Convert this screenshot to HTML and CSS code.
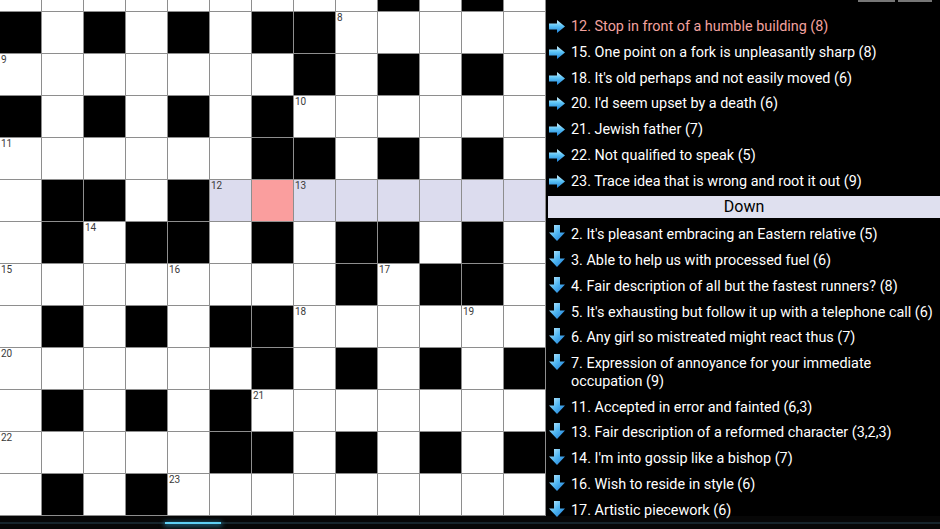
FILE: index.html
```html
<!DOCTYPE html>
<html>
<head>
<meta charset="utf-8">
<link rel="stylesheet" href="styles.css">
</head>
<body>
<svg width="0" height="0" class="defs">
  <defs>
    <linearGradient id="gr" x1="0" y1="0" x2="0" y2="1">
      <stop offset="0" stop-color="#d6f4ff"/>
      <stop offset="0.45" stop-color="#5cc4f7"/>
      <stop offset="1" stop-color="#1d7fd6"/>
    </linearGradient>
    <linearGradient id="gd" x1="0" y1="0" x2="1" y2="1">
      <stop offset="0" stop-color="#c9efff"/>
      <stop offset="0.5" stop-color="#4fb6f2"/>
      <stop offset="1" stop-color="#1a74cf"/>
    </linearGradient>
    <symbol id="ar" viewBox="0 0 16 13"><path d="M0 3.5 H8 V0 L16 6.5 L8 13 V9.5 H0 Z" fill="url(#gr)"/></symbol>
    <symbol id="ad" viewBox="0 0 16 16"><path d="M5 0 H11 V7.5 H16 L8 16 L0 7.5 H5 Z" fill="url(#gd)"/></symbol>
  </defs>
</svg>
<div class="screen">
  <div class="main">
    <div class="board">
      <div class="grid">
        <!-- row 0 -->
        <div class="c"></div><div class="c"></div><div class="c"></div><div class="c"></div><div class="c"></div><div class="c"></div><div class="c"></div><div class="c"></div><div class="c"></div><div class="c b"></div><div class="c"></div><div class="c b"></div><div class="c"></div>
        <!-- row 1 -->
        <div class="c b"></div><div class="c"></div><div class="c b"></div><div class="c"></div><div class="c b"></div><div class="c"></div><div class="c b"></div><div class="c b"></div><div class="c"><span class="n">8</span></div><div class="c"></div><div class="c"></div><div class="c"></div><div class="c"></div>
        <!-- row 2 -->
        <div class="c"><span class="n">9</span></div><div class="c"></div><div class="c"></div><div class="c"></div><div class="c"></div><div class="c"></div><div class="c"></div><div class="c b"></div><div class="c"></div><div class="c b"></div><div class="c"></div><div class="c b"></div><div class="c"></div>
        <!-- row 3 -->
        <div class="c b"></div><div class="c"></div><div class="c b"></div><div class="c"></div><div class="c b"></div><div class="c"></div><div class="c b"></div><div class="c"><span class="n">10</span></div><div class="c"></div><div class="c"></div><div class="c"></div><div class="c"></div><div class="c"></div>
        <!-- row 4 -->
        <div class="c"><span class="n">11</span></div><div class="c"></div><div class="c"></div><div class="c"></div><div class="c"></div><div class="c"></div><div class="c b"></div><div class="c b"></div><div class="c"></div><div class="c b"></div><div class="c"></div><div class="c b"></div><div class="c"></div>
        <!-- row 5 -->
        <div class="c"></div><div class="c b"></div><div class="c b"></div><div class="c"></div><div class="c b"></div><div class="c h"><span class="n">12</span></div><div class="c cur"></div><div class="c h"><span class="n">13</span></div><div class="c h"></div><div class="c h"></div><div class="c h"></div><div class="c h"></div><div class="c h"></div>
        <!-- row 6 -->
        <div class="c"></div><div class="c b"></div><div class="c"><span class="n">14</span></div><div class="c b"></div><div class="c b"></div><div class="c"></div><div class="c b"></div><div class="c"></div><div class="c b"></div><div class="c b"></div><div class="c"></div><div class="c b"></div><div class="c"></div>
        <!-- row 7 -->
        <div class="c"><span class="n">15</span></div><div class="c"></div><div class="c"></div><div class="c"></div><div class="c"><span class="n">16</span></div><div class="c"></div><div class="c"></div><div class="c"></div><div class="c b"></div><div class="c"><span class="n">17</span></div><div class="c b"></div><div class="c b"></div><div class="c"></div>
        <!-- row 8 -->
        <div class="c"></div><div class="c b"></div><div class="c"></div><div class="c b"></div><div class="c"></div><div class="c b"></div><div class="c b"></div><div class="c"><span class="n">18</span></div><div class="c"></div><div class="c"></div><div class="c"></div><div class="c"><span class="n">19</span></div><div class="c"></div>
        <!-- row 9 -->
        <div class="c"><span class="n">20</span></div><div class="c"></div><div class="c"></div><div class="c"></div><div class="c"></div><div class="c"></div><div class="c b"></div><div class="c"></div><div class="c b"></div><div class="c"></div><div class="c b"></div><div class="c"></div><div class="c b"></div>
        <!-- row 10 -->
        <div class="c"></div><div class="c b"></div><div class="c"></div><div class="c b"></div><div class="c"></div><div class="c b"></div><div class="c"><span class="n">21</span></div><div class="c"></div><div class="c"></div><div class="c"></div><div class="c"></div><div class="c"></div><div class="c"></div>
        <!-- row 11 -->
        <div class="c"><span class="n">22</span></div><div class="c"></div><div class="c"></div><div class="c"></div><div class="c"></div><div class="c b"></div><div class="c b"></div><div class="c"></div><div class="c b"></div><div class="c"></div><div class="c b"></div><div class="c"></div><div class="c b"></div>
        <!-- row 12 -->
        <div class="c"></div><div class="c b"></div><div class="c"></div><div class="c b"></div><div class="c"><span class="n">23</span></div><div class="c"></div><div class="c"></div><div class="c"></div><div class="c"></div><div class="c"></div><div class="c"></div><div class="c"></div><div class="c"></div>
      </div>
    </div>
    <div class="panel">
      <div class="toolbar">
        <div class="stub s1"></div>
        <div class="stub s2"></div>
      </div>
      <ul class="clues">
        <li class="clue sel"><svg class="arr"><use href="#ar"/></svg><span class="txt">12. Stop in front of a humble building (8)</span></li>
        <li class="clue"><svg class="arr"><use href="#ar"/></svg><span class="txt">15. One point on a fork is unpleasantly sharp (8)</span></li>
        <li class="clue"><svg class="arr"><use href="#ar"/></svg><span class="txt">18. It's old perhaps and not easily moved (6)</span></li>
        <li class="clue"><svg class="arr"><use href="#ar"/></svg><span class="txt">20. I'd seem upset by a death (6)</span></li>
        <li class="clue"><svg class="arr"><use href="#ar"/></svg><span class="txt">21. Jewish father (7)</span></li>
        <li class="clue"><svg class="arr"><use href="#ar"/></svg><span class="txt">22. Not qualified to speak (5)</span></li>
        <li class="clue"><svg class="arr"><use href="#ar"/></svg><span class="txt">23. Trace idea that is wrong and root it out (9)</span></li>
        <li class="head">Down</li>
        <li class="clue dn"><svg class="arr"><use href="#ad"/></svg><span class="txt">2. It's pleasant embracing an Eastern relative (5)</span></li>
        <li class="clue dn"><svg class="arr"><use href="#ad"/></svg><span class="txt">3. Able to help us with processed fuel (6)</span></li>
        <li class="clue dn"><svg class="arr"><use href="#ad"/></svg><span class="txt">4. Fair description of all but the fastest runners? (8)</span></li>
        <li class="clue dn"><svg class="arr"><use href="#ad"/></svg><span class="txt">5. It's exhausting but follow it up with a telephone call (6)</span></li>
        <li class="clue dn"><svg class="arr"><use href="#ad"/></svg><span class="txt">6. Any girl so mistreated might react thus (7)</span></li>
        <li class="clue dn"><svg class="arr"><use href="#ad"/></svg><span class="txt">7. Expression of annoyance for your immediate occupation (9)</span></li>
        <li class="clue dn"><svg class="arr"><use href="#ad"/></svg><span class="txt">11. Accepted in error and fainted (6,3)</span></li>
        <li class="clue dn"><svg class="arr"><use href="#ad"/></svg><span class="txt">13. Fair description of a reformed character (3,2,3)</span></li>
        <li class="clue dn"><svg class="arr"><use href="#ad"/></svg><span class="txt">14. I'm into gossip like a bishop (7)</span></li>
        <li class="clue dn"><svg class="arr"><use href="#ad"/></svg><span class="txt">16. Wish to reside in style (6)</span></li>
        <li class="clue dn"><svg class="arr"><use href="#ad"/></svg><span class="txt">17. Artistic piecework (6)</span></li>
      </ul>
    </div>
  </div>
  <div class="navbar">
    <div class="navline"><div class="glow"></div></div>
  </div>
</div>
</body>
</html>
```
FILE: styles.css
```css
* { box-sizing: border-box; }
html, body {
  margin: 0;
  padding: 0;
  background: #000;
}
body {
  width: 940px;
  height: 529px;
  overflow: hidden;
  font-family: Roboto, "Noto Sans", "Liberation Sans", sans-serif;
}
.defs { position: absolute; width: 0; height: 0; }
.screen {
  display: flex;
  flex-direction: column;
  width: 940px;
  height: 529px;
}
.main {
  display: flex;
  height: 516px;
  flex: none;
  z-index: 1;
}
.board {
  width: 546px;
  height: 516px;
  overflow: hidden;
  flex: none;
}
.grid {
  display: grid;
  grid-template-columns: repeat(13, 41px);
  grid-auto-rows: 41px;
  gap: 1px;
  padding: 0 1px 1px 0;
  background: #8e8e8e;
  width: 546px;
  margin-top: -30px;
}
.c {
  background: #fff;
  padding: 1px 0 0 1px;
}
.c.b { background: #000; }
.c.h { background: #dcdcee; }
.c.cur { background: #fa9e9e; }
.n {
  display: block;
  font-size: 10px;
  line-height: 10px;
  color: #3a3a3a;
}
.panel {
  flex: 1;
  height: 519px;
  padding-left: 2px;
  overflow: hidden;
}
.toolbar {
  height: 14px;
  display: flex;
  justify-content: flex-end;
  gap: 3px;
  padding-right: 8px;
}
.stub {
  height: 2px;
  background: #767676;
}
.s1 { width: 37px; }
.s2 { width: 34px; }
.clues {
  list-style: none;
  margin: 0;
  padding: 0;
}
.clue {
  display: flex;
  align-items: flex-start;
  padding: 4.2px 4px 3.55px 1px;
  color: #fff;
  font-size: 14.4px;
  line-height: 18px;
}
.clue.sel { color: #f3a29f; }
.arr {
  flex: none;
  width: 16px;
  height: 13px;
  margin-top: 2px;
  margin-right: 6px;
}
.dn .arr {
  height: 16px;
  margin-top: -1px;
}
.head {
  margin: 2px 0 4px 0;
  height: 22px;
  background: #dfe0ef;
  color: #000;
  text-align: center;
  font-size: 16px;
  line-height: 22px;
}
.navbar {
  height: 13px;
  background: #070707;
  padding-top: 6px;
}
.navline {
  height: 2px;
  background: #17252c;
  display: flex;
  padding-left: 165px;
}
.glow {
  width: 56px;
  height: 2px;
  background: #5fd0f5;
  box-shadow: 0 1px 5px 1px rgba(60, 180, 230, 0.6);
}
```
